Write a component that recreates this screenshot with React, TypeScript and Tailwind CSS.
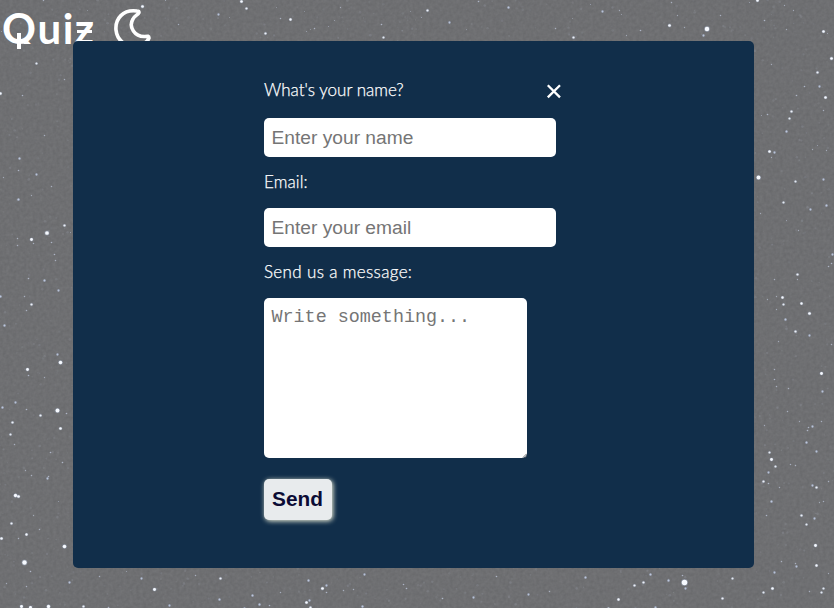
import React from "react";

type Star = [number, number, number];

// Bright stars: x, y, radius
const STARS: Star[] = [
  [142, 6, 1.8], [43, 0, 1], [178, 24, 1], [87, 10, 0.7], [1, 31, 0.8], [165, 0, 0.8],
  [241, 1, 1.7], [246, 8, 1.5], [218, 14, 1.2], [290, 19, 1.6], [280, 18, 1], [265, 33, 1.5], [314, 28, 1], [306, 31, 0.8], [310, 29, 0.7], [328, 26, 0.8], [334, 20, 0.8], [340, 7, 0.9], [229, 17, 0.7], [276, 7, 0.7], [304, 11, 0.7],
  [381, 24, 1.1], [383, 37, 1.4], [427, 10, 1.5], [421, 17, 0.8], [449, 22, 1.2], [478, 1, 1.1], [466, 29, 0.7], [410, 11, 0.7],
  [508, 7, 1.3], [555, 28, 1], [573, 37, 1.5], [602, 11, 1.2], [619, 10, 0.9], [621, 14, 0.8], [640, 30, 1.1], [626, 35, 0.9], [669, 25, 1.8], [684, 27, 0.9], [671, 2, 1], [677, 15, 0.9], [706.5, 28.5, 3], [703, 35, 1.2], [720, 15, 1], [757, 0, 1.7], [784, 5, 0.9], [793, 10, 0.9], [764, 20, 1.1], [786, 29, 0.9], [823, 31, 1.7], [827, 33, 0.8], [749, 2, 0.8], [590, 4, 0.8], [572, 18, 0.7],
  [831, 58, 1.8], [817, 72, 1.5], [804, 86, 1.1], [819, 86, 1.2], [796, 95, 1.1], [825, 97, 1.7], [791, 111, 1.5], [789, 118, 1.4], [767, 114, 1.1], [761, 115, 0.8], [786, 131, 1.3], [769, 151, 1.7], [774, 152, 1.2], [771, 157, 0.9], [758, 177, 2.6], [795, 181, 1.4], [823, 179, 1.2], [783, 202, 1.4], [810, 209, 1.2], [826, 205, 1.3], [760, 213, 0.9], [786, 220, 0.8], [798, 230, 0.9], [771, 64, 0.9], [823, 110, 1], [812, 149, 0.9], [826, 150, 0.9], [817, 145, 0.8],
  [832, 254, 1.2], [831, 263, 1.1], [828, 266, 1.1], [797, 274, 1.5], [797, 279, 0.9], [774, 279, 1], [782, 297, 1.6], [783, 304, 1.4], [801, 303, 1.6], [776, 296, 0.9], [767, 299, 0.9], [776, 309, 0.9], [809, 313, 1.8], [785, 319, 1.3],
  [795, 331, 1.5], [809, 335, 1.2], [831, 344, 1], [778, 341, 0.9], [821, 373, 1.9], [774, 369, 1], [774, 379, 1.1], [776, 386, 1], [788, 388, 1], [822, 391, 1.2], [787, 411, 1], [799, 421, 0.9], [821, 421, 1], [764, 425, 0.9], [812, 426, 1.2], [808, 427, 1.1], [807, 430, 1.1], [806, 442, 1.3], [816, 451, 1.2], [769, 452, 1.4], [771, 459, 1.9], [775, 466, 1.4], [768, 472, 1.2], [790, 464, 1], [795, 465, 1], [763, 481, 1.5], [768, 483, 1.1], [779, 487, 1], [812, 485, 1.2], [816, 487, 1.5], [828, 481, 1], [771, 501, 1.3], [819, 502, 0.9], [823, 501, 1], [766, 515, 1.1], [801, 515, 1.5], [806, 524, 1.4], [814, 518, 1.2], [815, 545, 1.9], [816, 565, 1.6], [781, 561, 1], [795, 563, 1], [796, 566, 1.2], [774, 572, 1.2], [772, 588, 1.7], [763, 592, 1.4], [823, 588, 1.4], [821, 592, 1.4], [828, 573, 0.9], [809, 591, 1],
  [36, 63, 1.4], [64, 79, 1], [0, 93, 1.6], [22, 95, 1.1], [44, 135, 1], [19, 158, 1.3], [18, 170, 1.1], [3, 177, 0.9], [36, 174, 1.2], [51, 186, 1], [18, 199, 1.3], [31, 195, 0.9], [46.5, 232.5, 2.5], [64, 225, 1.5], [31, 239, 1.9], [33, 243, 1], [51, 242, 1.1], [54, 254, 1.1], [55, 260, 1], [44, 280, 1.3], [28, 278, 1.1], [58, 290, 1.2], [0, 296, 1.3], [31, 304, 1.5], [24, 296, 1], [26, 310, 1], [17, 238, 1], [17, 245, 1], [70, 232, 0.8],
  [4, 325, 1.3], [60, 362, 2.4], [57, 354, 1.2], [27, 369, 1.9], [28, 375, 1.1], [44, 377, 0.9], [2, 407, 1.3], [15, 402, 1.2], [26, 409, 1.1], [40, 415, 1.5], [57, 410, 2.6], [66, 413, 1.1], [12, 422, 1.5], [60, 428, 1.7], [10, 434, 1.4], [14, 444, 1], [50, 452, 1.1], [62, 462, 1.1], [48, 476, 1.1], [47, 478, 1.2], [31, 475, 1], [25, 470, 0.9], [15, 495, 2.2], [18, 496, 1.8], [58, 501, 0.8], [33, 515, 0.9], [11, 523, 1.5], [39, 529, 1], [26, 534, 1.6], [1, 538, 1.7], [64, 546, 2.4], [18, 538, 1], [24, 562, 3], [30, 571, 1.1], [69, 582, 1.2], [6, 583, 0.9], [26, 586, 1], [21, 606, 2], [30, 607, 2], [48, 606, 2.2],
  [141, 578, 1.2], [154, 589, 2], [99, 576, 1], [83, 606, 1.5], [108, 607, 1.1], [169, 605, 1.2], [220, 578, 1.5], [195, 575, 1], [219, 599, 1.3], [252, 595, 1.3], [244, 608, 1.2], [259, 604, 1.3], [269, 605, 1.1], [280, 592, 1], [308, 580, 1.3], [306, 602, 1.7], [309, 600, 1.2], [310, 607, 1.5], [322, 588, 1.8], [326, 585, 1.2], [326, 592, 1.1], [343, 590, 1], [353, 589, 1], [364, 574, 1.2], [362, 606, 1.3], [403, 584, 1.1], [406, 588, 1.1], [442, 598, 1.1], [473, 597, 1.2], [496, 576, 1.1], [528, 594, 1.2], [549, 591, 1], [585, 577, 1.3], [576, 609, 1.8], [618, 599, 1.6], [634, 585, 1.5], [643, 582, 1.5], [650, 574, 1.3], [635, 609, 1.9], [608, 608, 1.4], [668, 580, 1.3], [684, 582, 3.7], [685, 588, 1.2], [722, 598, 1.5], [732, 578, 1.4], [655, 607, 1.2], [682, 575, 1.1], [126, 571, 0.8],
];

// Faint dust scattered behind the bright stars
const DUST: Array<[number, number, number, number]> = (() => {
  let seed = 7;
  const next = () => {
    seed = (seed * 16807) % 2147483647;
    return seed / 2147483647;
  };
  return Array.from({ length: 2400 }, () => [next() * 834, next() * 608, 0.6 + next() * 0.8, 0.03 + next() * 0.12]);
})();

function Sky() {
  return (
    <svg className="absolute inset-0" width="834" height="608" aria-hidden="true">
      <filter id="grain" x="0" y="0" width="100%" height="100%" colorInterpolationFilters="sRGB">
        <feTurbulence type="fractalNoise" baseFrequency="0.3" numOctaves="2" seed="4" />
        <feColorMatrix values="0.06 0 0 0 0.403  0.06 0 0 0 0.406  0.06 0 0 0 0.416  0 0 0 0 1" />
      </filter>
      <rect width="834" height="608" filter="url(#grain)" />
      {DUST.map(([x, y, r, o], i) => (
        <circle key={i} cx={x} cy={y} r={r} fill="#c3cbdf" opacity={o} />
      ))}
      {STARS.map(([x, y, r], i) => (
        <g key={i} transform={`translate(${x + 0.5} ${y + 0.5})`}>
          {r > 1.1 && <circle r={r * 0.85 + 0.4} fill="#b5c9ef" opacity="0.3" />}
          <circle r={r * 0.74} fill={r > 1.3 ? "#f7faff" : "#cbd5ec"} opacity={Math.min(1, r * 0.62)} />
        </g>
      ))}
    </svg>
  );
}

function Logo() {
  return (
    <div className="relative flex h-[41px] items-start text-white">
      <span className="relative ml-[2px] -mt-[2px] block font-['Lato'] text-[42px] leading-[60px] font-bold tracking-[1.5px]">
        <span className="inline-block [clip-path:inset(0_0_14px_0)]">Q</span>uiz
        <span className="absolute top-[35px] left-[15px] h-[16px] w-[4px] bg-white" />
        <span className="absolute top-[32px] left-[75px] h-[3px] w-[15px] bg-white" />
      </span>
      <svg className="absolute top-[8px] left-[113px]" width="40" height="40" viewBox="0 0 40 40" fill="none" stroke="currentColor" strokeWidth="3.6" strokeLinejoin="round">
        <path d="M24 3 C10 1 2 11 3 22 C4 32 12 38 21 38 C28 38 34 35 36 30 C36 28 35 28 32 28.5 C22 29 15 19 20 11 C21 8 25 7 26 4.5 C26 3.5 25 3 24 3Z" />
      </svg>
    </div>
  );
}

const label = "relative -top-px block h-[19px] whitespace-nowrap font-['Lato'] text-[17px] leading-[19px] font-light text-white [-webkit-text-stroke:0.25px_white]";
const field =
  "block h-[39px] w-[292px] rounded-[5px] bg-white px-[7.5px] font-['Liberation_Sans'] text-[19.2px] text-black placeholder:text-[#757575] placeholder:opacity-100 outline-none";

export default function App() {
  return (
    <main className="relative h-[608px] w-[834px] overflow-hidden bg-[#6e6f72]">
      <Sky />
      <Logo />
      <section className="relative ml-[73px] flex h-[527px] w-[681px] rounded-[5px] bg-[#112e4a] pl-[191px]">
        <form className="flex w-[300px] flex-col items-start pt-[40px]">
          <div className="flex w-full items-start justify-between">
            <label className={label}>What's your name?</label>
            <button type="button" aria-label="Close" className="mt-[2px] mr-[2px] text-white">
              <svg width="16" height="16" viewBox="0 0 16 16" fill="none" stroke="currentColor" strokeWidth="2.3">
                <path d="M1.8 2.2 14 14.4M14 2.2 1.8 14.4" />
              </svg>
            </button>
          </div>
          <input className={`${field} mt-[18px]`} placeholder="Enter your name" />
          <label className={`${label} mt-4 tracking-[0.1px]`}>Email:</label>
          <input className={`${field} mt-4`} placeholder="Enter your email" />
          <label className={`${label} mt-4 tracking-[0.35px]`}>Send us a message:</label>
          <div className="relative mt-4">
            <textarea
              className="block h-[160px] w-[263px] resize-none rounded-[5px] bg-white px-[7.5px] pt-[9px] font-['Liberation_Mono'] text-[18.4px] leading-[21px] text-black outline-none placeholder:text-[#757575] placeholder:opacity-100"
              placeholder="Write something..."
            />
            <svg className="absolute right-0 bottom-0" width="5" height="5" viewBox="0 0 5 5" stroke="#555" strokeWidth="0.8">
              <path d="M1 4.5 4.5 1M3.2 4.8 4.8 3.2" />
            </svg>
          </div>
          <button type="button" className="mt-[21px] h-[41px] w-[68px] rounded-[5px] bg-[#e8ebed] pr-[1px] pb-[2px] font-['Liberation_Sans'] text-[20.8px] font-bold text-[#0b0b35] shadow-[1px_1px_5px_#f5f5dc]">
            Send
          </button>
        </form>
      </section>
    </main>
  );
}
